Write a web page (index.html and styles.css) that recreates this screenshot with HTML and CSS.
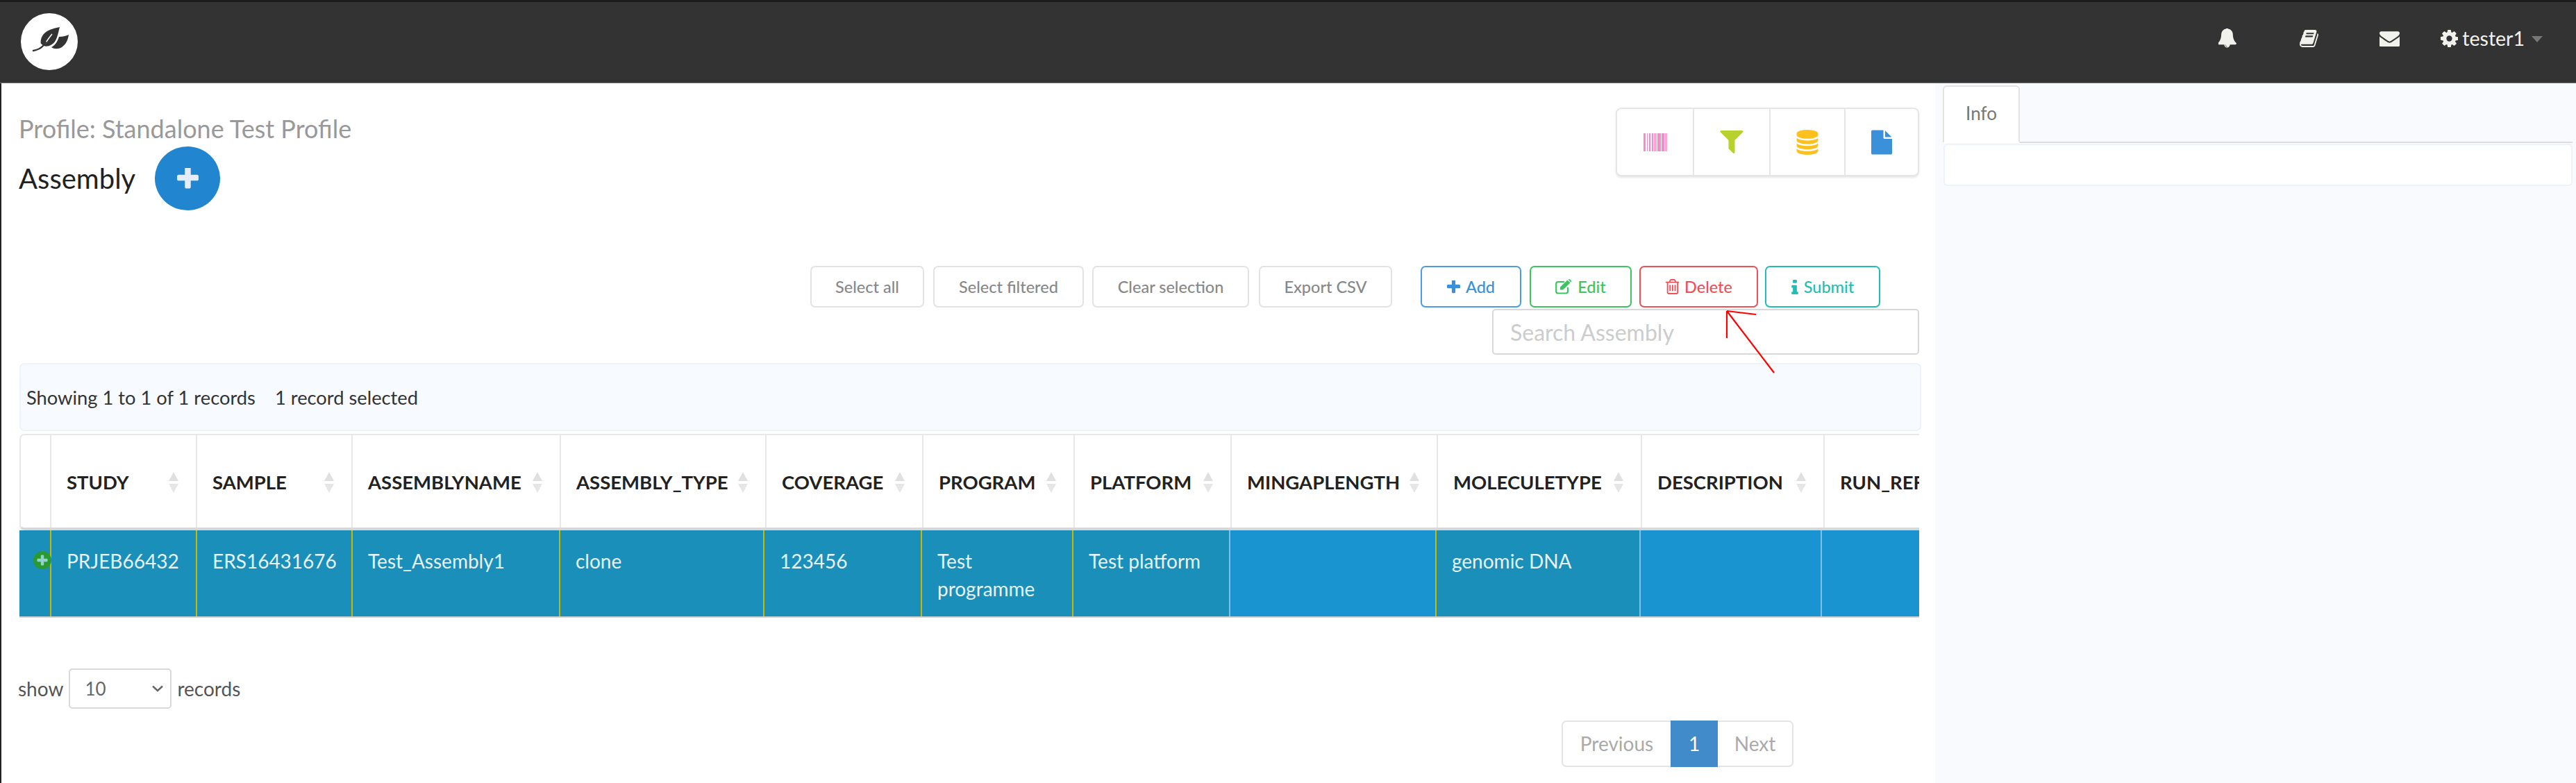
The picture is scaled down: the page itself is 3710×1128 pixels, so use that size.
FILE: index.html
```html
<!DOCTYPE html>
<html lang="en">
<head>
<title>Assembly</title>
<meta charset="utf-8">
<meta name="viewport" content="width=device-width, initial-scale=1">
<link rel="stylesheet" href="styles.css">
</head>
<body>

<!-- Top bar -->
<div class="navbar">
  <div class="logo">
    <svg viewBox="0 0 82 82" width="82" height="82">
      <path fill="#333" d="M44 49 C50 46 53 40 55 34 C60 34 65 33 69 31 C68 38 65 45 59 49 C54 52 48 52 44 49 Z"/>
      <path fill="#333" d="M56 20 C47 22 38 24 33 30 C29 35 28 40 29 44 L33 47 C39 49 45 46 49 41 C53 35 54 27 56 20 Z"/>
      <path fill="none" stroke="#fff" stroke-width="1.6" d="M35 44 C38 39 41 35 45 30"/>
      <path fill="none" stroke="#333" stroke-width="2.4" stroke-linecap="round" d="M18 54 C23 53 27 52 31 48 C33 46 35 44 36 42"/>
    </svg>
  </div>
  <div class="nav-right">
    <svg class="nav-icon bell" viewBox="128 128 1600 1664"><path d="M912 1696q0-16-16-16-59 0-101.5-42.5t-42.5-101.5q0-16-16-16t-16 16q0 73 51.5 124.5t124.5 51.5q16 0 16-16zm816-288q0 52-38 90t-90 38h-448q0 106-75 181t-181 75-181-75-75-181h-448q-52 0-90-38t-38-90q50-42 91-88t85-119.5 74.5-158.5 50-206 19.5-260q0-152 117-282.5t307-158.5q-8-19-8-39 0-40 28-68t68-28 68 28 28 68q0 20-8 39 190 28 307 158.5t117 282.5q0 139 19.5 260t50 206 74.5 158.5 85 119.5 91 88z"/></svg>
    <svg class="nav-icon book" viewBox="64 128 1664 1536"><path d="M1703 478q40 57 18 129l-275 906q-19 64-76.5 107.5t-122.5 43.5h-923q-77 0-148.5-53.5t-99.5-131.5q-24-67-2-127 0-4 3-27t4-37q1-8-3-21.5t-3-19.5q2-11 8-21t16.5-23.5 16.5-23.5q23-38 45-91.5t30-91.5q3-10 .5-30t-.5-28q3-11 17-28t17-23q21-36 42-92t25-90q1-9-2.5-32t.5-28q4-13 22-30.5t22-22.5q19-26 42.5-84.5t27.5-96.5q1-8-3-25.5t-2-26.5q2-8 9-18t18-23 17-21q8-12 16.5-30.5t15-35 16-36 19.5-32 26.5-23.5 36-11.5 47.5 5.5l-1 3q38-9 51-9h761q74 0 114 56t18 130l-274 906q-36 119-71.5 153.5t-128.5 34.5h-869q-27 0-38 15-11 16-1 43 24 70 144 70h923q29 0 56-15.5t35-41.5l300-987q7-22 5-57 38 15 59 43zm-1064 2q-4 13 2 22.5t20 9.5h608q13 0 25.5-9.5t16.5-22.5l21-64q4-13-2-22.5t-20-9.5h-608q-13 0-25.5 9.5t-16.5 22.5zm-83 256q-4 13 2 22.5t20 9.5h608q13 0 25.5-9.5t16.5-22.5l21-64q4-13-2-22.5t-20-9.5h-608q-13 0-25.5 9.5t-16.5 22.5z"/></svg>
    <svg class="nav-icon mail" viewBox="0 256 1792 1280"><path d="M1792 710v794q0 66-47 113t-113 47h-1472q-66 0-113-47t-47-113v-794q44 49 101 87 362 246 497 345 57 42 92.5 65.5t94.5 48 110 24.5h2q51 0 110-24.5t94.5-48 92.5-65.5q170-123 498-345 57-39 100-87zm0-294q0 79-49 151t-122 123q-376 261-468 325-10 7-42.5 30.5t-54 38-52 32.5-57.5 27-50 9h-2q-23 0-50-9t-57.5-27-52-32.5-54-38-42.5-30.5q-91-64-262-182.5t-205-142.5q-62-42-117-115.5t-55-136.5q0-78 41.5-130t118.5-52h1472q65 0 112.5 47t47.5 113z"/></svg>
    <svg class="nav-icon gear" viewBox="128 128 1536 1536"><path d="M1152 896q0-106-75-181t-181-75-181 75-75 181 75 181 181 75 181-75 75-181zm512-109v222q0 12-8 23t-20 13l-185 28q-19 54-39 91 35 50 107 138 10 12 10 25t-9 23q-27 37-99 108t-94 71q-12 0-26-9l-138-108q-44 23-91 38-16 136-29 186-7 28-36 28h-222q-14 0-24.5-8.5t-11.5-21.5l-28-184q-49-16-90-37l-141 107q-10 9-25 9-14 0-25-11-126-114-165-168-7-10-7-23 0-12 8-23 15-21 51-66.5t54-70.5q-27-50-41-99l-183-27q-13-2-21-12.5t-8-23.5v-222q0-12 8-23t19-13l186-28q14-46 39-92-40-57-107-138-10-12-10-24 0-10 9-23 26-36 98.5-107.5t94.5-71.5q13 0 26 10l138 107q44-23 91-38 16-136 29-186 7-28 36-28h222q14 0 24.5 8.5t11.5 21.5l28 184q49 16 90 37l142-107q9-9 24-9 13 0 25 10 129 119 165 170 7 8 7 22 0 12-8 23-15 21-51 66.5t-54 70.5q26 50 41 98l183 28q13 2 21 12.5t8 23.5z"/></svg>
    <span class="user">tester1</span>
    <span class="caret"></span>
  </div>
</div>

<div class="content">

  <!-- Main column -->
  <div class="main">
    <div class="page_head">
      <div class="titles">
        <p class="profile_name">Profile: Standalone Test Profile</p>
        <div class="component">
          <h2>Assembly</h2>
          <span class="add_circle">
            <svg viewBox="192 192 1408 1408" width="31" height="31"><path fill="#e3eefa" d="M1600 736v192q0 40-28 68t-68 28h-416v416q0 40-28 68t-68 28h-192q-40 0-68-28t-28-68v-416h-416q-40 0-68-28t-28-68v-192q0-40 28-68t68-28h416v-416q0-40 28-68t68-28h192q40 0 68 28t28 68v416h416q40 0 68 28t28 68z"/></svg>
          </span>
        </div>
      </div>
      <div class="tool_panel">
        <div class="tool tool1">
          <svg viewBox="0 0 34 26" width="34" height="26" fill="#f48cc9">
            <rect x="0" width="3" height="26"/><rect x="5" width="1" height="26"/><rect x="8" width="2" height="26"/><rect x="12" width="2" height="26"/><rect x="15" width="4" height="26" fill="#f5a8d6"/><rect x="20" width="5" height="26"/><rect x="26" width="4" height="26"/><rect x="31" width="3" height="26" fill="#f5a8d6"/>
          </svg>
        </div>
        <div class="tool tool2">
          <svg viewBox="128 256 1536 1408" width="36" height="35"><path fill="#b9d12c" d="M1595 295q17 41-14 70l-493 493v742q0 42-39 59-13 5-25 5-27 0-45-19l-256-256q-19-19-19-45v-486l-493-493q-31-29-14-70 17-39 59-39h1280q42 0 59 39z"/></svg>
        </div>
        <div class="tool tool3">
          <svg viewBox="128 0 1536 1792" width="32" height="36"><path fill="#fdc01f" d="M896 768q237 0 443-43t325-127v170q0 69-103 128t-280 93.5-385 34.5-385-34.5-280-93.5-103-128v-170q119 84 325 127t443 43zm0 768q237 0 443-43t325-127v170q0 69-103 128t-280 93.5-385 34.5-385-34.5-280-93.5-103-128v-170q119 84 325 127t443 43zm0-384q237 0 443-43t325-127v170q0 69-103 128t-280 93.5-385 34.5-385-34.5-280-93.5-103-128v-170q119 84 325 127t443 43zm0-1152q208 0 385 34.5t280 93.5 103 128v128q0 69-103 128t-280 93.5-385 34.5-385-34.5-280-93.5-103-128v-128q0-69 103-128t280-93.5 385-34.5z"/></svg>
        </div>
        <div class="tool tool4">
          <svg viewBox="128 0 1536 1792" width="30" height="36"><path fill="#3a90d9" d="M1152 512v-472q22 14 36 28l408 408q14 14 28 36h-472zm-128 32q0 40 28 68t68 28h544v1056q0 40-28 68t-68 28h-1344q-40 0-68-28t-28-68v-1600q0-40 28-68t68-28h800v544z"/></svg>
        </div>
      </div>
    </div>

    <div class="toolbar">
      <button class="btn plain b_all">Select all</button>
      <button class="btn plain b_filtered">Select filtered</button>
      <button class="btn plain b_clear">Clear selection</button>
      <button class="btn plain b_export">Export CSV</button>
      <button class="btn b_add">
        <svg viewBox="192 192 1408 1408" width="19" height="19"><path fill="currentColor" d="M1600 736v192q0 40-28 68t-68 28h-416v416q0 40-28 68t-68 28h-192q-40 0-68-28t-28-68v-416h-416q-40 0-68-28t-28-68v-192q0-40 28-68t68-28h416v-416q0-40 28-68t68-28h192q40 0 68 28t28 68v416h416q40 0 68 28t28 68z"/></svg>
        Add
      </button>
      <button class="btn b_edit">
        <svg viewBox="0 0 24 22" width="24" height="22">
          <path fill="none" stroke="currentColor" stroke-width="2.2" d="M18 12 V18 Q18 20.5 15 20.5 H4 Q1.2 20.5 1.2 18 V7 Q1.2 4 4 4 H13"/>
          <path fill="currentColor" d="M7 15.5 V11.5 L17.5 1.5 L21.5 5.5 L11 15.5 Z M18.5 0.5 Q20 -0.5 21.5 0.8 L22.5 1.8 Q23.7 3.2 22.5 4.5 Z"/>
        </svg>
        Edit
      </button>
      <button class="btn b_delete">
        <svg viewBox="128 128 1408 1536" width="20" height="22"><path fill="currentColor" d="M704 736v576q0 14-9 23t-23 9h-64q-14 0-23-9t-9-23v-576q0-14 9-23t23-9h64q14 0 23 9t9 23zm256 0v576q0 14-9 23t-23 9h-64q-14 0-23-9t-9-23v-576q0-14 9-23t23-9h64q14 0 23 9t9 23zm256 0v576q0 14-9 23t-23 9h-64q-14 0-23-9t-9-23v-576q0-14 9-23t23-9h64q14 0 23 9t9 23zm128 724v-948h-896v948q0 22 7 40.5t14.5 27 10.5 8.5h832q3 0 10.5-8.5t14.5-27 7-40.5zm-672-1076h448l-48-117q-7-9-17-11h-317q-10 2-17 11zm928 32v64q0 14-9 23t-23 9h-96v948q0 83-47 143.5t-113 60.5h-832q-66 0-113-58.5t-47-141.5v-952h-96q-14 0-23-9t-9-23v-64q0-14 9-23t23-9h309l70-167q15-37 54-63t79-26h320q40 0 79 26t54 63l70 167h309q14 0 23 9t9 23z"/></svg>
        Delete
      </button>
      <button class="btn b_submit">
        <svg viewBox="576 128 640 1408" width="10" height="21"><path fill="currentColor" d="M1216 1344v128q0 26-19 45t-45 19h-512q-26 0-45-19t-19-45v-128q0-26 19-45t45-19h64v-384h-64q-26 0-45-19t-19-45v-128q0-26 19-45t45-19h384q26 0 45 19t19 45v576h64q26 0 45 19t19 45zm-128-1152v192q0 26-19 45t-45 19h-256q-26 0-45-19t-19-45v-192q0-26 19-45t45-19h256q26 0 45 19t19 45z"/></svg>
        Submit
      </button>
    </div>

    <div class="search_row">
      <input class="search" type="text" placeholder="Search Assembly">
    </div>

    <div class="info_bar">
      <span>Showing 1 to 1 of 1 records</span>
      <span>1 record selected</span>
    </div>

    <!-- Table: header and body are separate grids, as their columns differ by a few pixels -->
    <div class="table_wrap">
      <div class="thead">
        <div class="th"></div>
        <div class="th">STUDY<span class="sort"></span></div>
        <div class="th">SAMPLE<span class="sort"></span></div>
        <div class="th">ASSEMBLYNAME<span class="sort"></span></div>
        <div class="th">ASSEMBLY_TYPE<span class="sort"></span></div>
        <div class="th">COVERAGE<span class="sort"></span></div>
        <div class="th">PROGRAM<span class="sort"></span></div>
        <div class="th">PLATFORM<span class="sort"></span></div>
        <div class="th">MINGAPLENGTH<span class="sort"></span></div>
        <div class="th">MOLECULETYPE<span class="sort"></span></div>
        <div class="th">DESCRIPTION<span class="sort"></span></div>
        <div class="th">RUN_REF</div>
      </div>
      <div class="tbody">
        <div class="td sel first">
          <svg class="expand" viewBox="128 128 1536 1536" width="26" height="26"><circle cx="896" cy="896" r="500" fill="#8fd3cb"/><path fill="#2a9a30" d="M1344 960v-128q0-26-19-45t-45-19h-256v-256q0-26-19-45t-45-19h-128q-26 0-45 19t-19 45v256h-256q-26 0-45 19t-19 45v128q0 26 19 45t45 19h256v256q0 26 19 45t45 19h128q26 0 45-19t19-45v-256h256q26 0 45-19t19-45zm320-64q0 209-103 385.5t-279.5 279.5-385.5 103-385.5-103-279.5-279.5-103-385.5 103-385.5 279.5-279.5 385.5-103 385.5 103 279.5 279.5 103 385.5z"/></svg>
        </div>
        <div class="td sel">PRJEB66432</div>
        <div class="td sel">ERS16431676</div>
        <div class="td sel">Test_Assembly1</div>
        <div class="td sel">clone</div>
        <div class="td sel">123456</div>
        <div class="td sel">Test programme</div>
        <div class="td sel">Test platform</div>
        <div class="td"></div>
        <div class="td sel">genomic DNA</div>
        <div class="td"></div>
        <div class="td"></div>
      </div>
    </div>

    <div class="table_foot">
      <span>show</span>
      <div class="length_box">
        <span>10</span>
        <svg viewBox="0 0 16 10" width="16" height="10"><path fill="none" stroke="#666" stroke-width="2.4" d="M1 1.5 L8 8 L15 1.5"/></svg>
      </div>
      <span>records</span>
    </div>

    <div class="pager_row">
      <div class="pager">
        <a class="page_prev">Previous</a>
        <a class="page_on">1</a>
        <a class="page_next">Next</a>
      </div>
    </div>

    <!-- hand drawn arrow pointing at Delete -->
    <svg class="arrow" viewBox="0 0 90 110" width="90" height="110">
      <path fill="none" stroke="#f00" stroke-width="2.2" d="M7 10 L75 99"/>
      <path fill="none" stroke="#f00" stroke-width="2.2" d="M7 10 L49 15"/>
      <path fill="none" stroke="#f00" stroke-width="2.2" d="M7 10 L7 49"/>
    </svg>
  </div>

  <!-- Side column -->
  <div class="side">
    <div class="tabs">
      <div class="tab">Info</div>
    </div>
    <div class="tab_box"></div>
  </div>
</div>

</body>
</html>
```

FILE: styles.css
```css
* {
  box-sizing: border-box;
}

html, body {
  margin: 0;
  height: 100%;
}

body {
  font-family: Lato, "Liberation Sans", sans-serif;
  color: #333;
  background: #fff;
  overflow: hidden;
}

/* Top bar */
.navbar {
  display: flex;
  align-items: center;
  height: 120px;
  padding-left: 30px;
  background: #333;
  border-top: 3px solid #1c1c1c;
  border-bottom: 1px solid #777;
}

.logo {
  width: 82px;
  height: 82px;
  margin-top: -3px;
  border-radius: 50%;
  background: #fff;
}

.nav-right {
  display: flex;
  align-items: center;
  margin-left: auto;
  margin-top: -12px;
  padding-right: 48px;
  color: #f2f2ec;
}

.nav-icon {
  fill: #f2f2ec;
}

.bell {
  width: 26px;
  height: 28px;
}

.book {
  width: 27px;
  height: 25px;
  margin-left: 91px;
}

.mail {
  width: 29px;
  height: 23px;
  margin-left: 88px;
}

.gear {
  width: 25px;
  height: 25px;
  margin-left: 59px;
  margin-right: 6px;
}

.user {
  font-size: 28.5px;
  line-height: 30px;
}

.caret {
  margin-left: 10px;
  margin-top: 2px;
  border-left: 8px solid transparent;
  border-right: 8px solid transparent;
  border-top: 9px solid #777;
}

/* Two columns below the bar */
.content {
  display: flex;
  height: 1008px;
}

.main {
  position: relative;
  width: 2787px;
  padding: 0 23px 0 26px;
  border-left: 2px solid #222;
  background: #fff;
}

.side {
  flex: 1;
  padding: 3px 5px 0 11px;
  background: #f9fafe;
}

/* Title and the four tool buttons */
.page_head {
  display: flex;
  justify-content: space-between;
  height: 263px;
}

.titles {
  margin-left: -1px;
}

.profile_name {
  margin: 45px 0 0;
  font-size: 36px;
  line-height: 40px;
  color: #999;
}

.component {
  display: flex;
  align-items: center;
  margin-top: 6px;
}

.component h2 {
  margin: 0;
  font-size: 40px;
  font-weight: 400;
  line-height: 46px;
  color: #222;
}

.add_circle {
  display: flex;
  align-items: center;
  justify-content: center;
  width: 94px;
  height: 92px;
  margin-left: 28px;
  border-radius: 50%;
  background: #2185d0;
}

.tool_panel {
  display: flex;
  height: 99px;
  margin-top: 35px;
  background: #fff;
  border: 2px solid #e6e6e6;
  border-radius: 8px;
  box-shadow: 0 2px 3px rgba(0, 0, 0, 0.1);
}

.tool {
  display: flex;
  align-items: center;
  justify-content: center;
  border-left: 2px solid #e6e6e6;
}

.tool1 {
  width: 109px;
  border-left: 0;
}

.tool2 {
  width: 110px;
}

.tool3 {
  width: 108px;
}

.tool4 {
  width: 106px;
}

/* Action buttons */
.toolbar {
  display: flex;
  justify-content: flex-end;
  padding-right: 56px;
}

.btn {
  display: flex;
  align-items: center;
  justify-content: center;
  gap: 8px;
  height: 60px;
  padding: 0;
  font-family: Lato, sans-serif;
  font-size: 23.5px;
  font-weight: 500;
  background: #fff;
  border: 2px solid #ccc;
  border-radius: 7px;
}

.plain {
  color: #888;
  border-color: #e3e3e3;
}

.b_all {
  width: 164px;
}

.b_filtered {
  width: 217px;
  margin-left: 13px;
}

.b_clear {
  width: 226px;
  margin-left: 12px;
}

.b_export {
  width: 192px;
  margin-left: 14px;
}

.b_add {
  width: 145px;
  margin-left: 41px;
  color: #3a8fd8;
  border-color: #4b9ce0;
}

.b_edit {
  width: 147px;
  margin-left: 12px;
  color: #3cc560;
  border-color: #3cc560;
}

.b_delete {
  width: 171px;
  margin-left: 11px;
  color: #ee5058;
  border-color: #ee5058;
}

.b_submit {
  width: 166px;
  margin-left: 10px;
  color: #22bdb5;
  border-color: #22bdb5;
}

.search_row {
  display: flex;
  justify-content: flex-end;
  margin-top: 2px;
}

.search {
  width: 615px;
  height: 66px;
  padding: 0 24px;
  font-family: Lato, sans-serif;
  font-size: 32px;
  background: #fff;
  border: 2px solid #d8d8d8;
  border-radius: 5px;
}

.search::placeholder {
  color: #ccc;
}

.info_bar {
  display: flex;
  align-items: center;
  gap: 28px;
  height: 98px;
  margin-top: 12px;
  margin-right: -3px;
  padding: 0 8px;
  font-size: 27.3px;
  background: #f7faff;
  border: 2px solid #edf3fc;
  border-radius: 7px;
}

/* Table */
.table_wrap {
  margin-top: 4px;
  overflow: hidden;
}

.thead, .tbody {
  display: grid;
}

.thead {
  grid-template-columns: 42px 210px 224px 300px 296px 226px 218px 226px 297px 294px 263px 138px;
  height: 139px;
  border: 2px solid #e8e8e8;
  border-right: 0;
  border-bottom: 4px solid #d8d8d8;
  border-radius: 7px 0 0 7px;
}

.th {
  display: flex;
  align-items: flex-start;
  padding: 52px 0 0 22px;
  font-size: 27.5px;
  font-weight: 700;
  line-height: 32px;
  color: #222;
  border-left: 2px solid #e8e8e8;
  white-space: nowrap;
  overflow: hidden;
}

.th:first-child {
  border-left: 0;
}

/* Up and down triangles at the end of a heading */
.sort {
  position: relative;
  flex: none;
  width: 14px;
  height: 30px;
  margin-left: auto;
  margin-right: 25px;
  margin-top: 1px;
}

.sort::before, .sort::after {
  content: "";
  position: absolute;
  left: 0;
  border-left: 7px solid transparent;
  border-right: 7px solid transparent;
}

.sort::before {
  top: 0;
  border-bottom: 13px solid #e0e0e0;
}

.sort::after {
  bottom: 0;
  border-top: 13px solid #e6e6e6;
}

.tbody {
  grid-template-columns: 44px 210px 224px 299px 294px 227px 218px 226px 297px 294px 261px 142px;
  height: 126px;
  border-bottom: 2px solid #d4d4d4;
}

.td {
  padding: 24px 22px 0 22px;
  font-size: 28px;
  line-height: 40px;
  color: #e6f4f9;
  background: #1a93d1;
  border-left: 2px solid #7fc0e8;
}

.td.sel {
  background: #1a8fb9;
  border-left-color: #c8b800;
}

.td.first {
  position: relative;
  padding: 0;
  border-left: 0;
}

.expand {
  position: absolute;
  top: 30px;
  left: 20px;
}

/* Below the table */
.table_foot {
  display: flex;
  align-items: center;
  gap: 8px;
  margin-top: 73px;
  margin-left: -2px;
  font-size: 28px;
  color: #555;
}

.length_box {
  display: flex;
  align-items: center;
  justify-content: space-between;
  width: 148px;
  height: 58px;
  padding: 0 10px 0 21px;
  font-size: 26px;
  color: #666;
  border: 2px solid #d8d8d8;
  border-radius: 5px;
}

.pager_row {
  display: flex;
  justify-content: flex-end;
  margin-top: 17px;
  padding-right: 181px;
}

.pager {
  display: flex;
  height: 67px;
  font-size: 28px;
  line-height: 63px;
  color: #aaa;
  border: 2px solid #e4e4e4;
  border-radius: 7px;
}

.page_prev {
  width: 155px;
  text-align: center;
}

.page_on {
  width: 68px;
  height: 67px;
  margin-top: -2px;
  line-height: 67px;
  text-align: center;
  color: #fff;
  background: #428bca;
}

.page_next {
  width: 107px;
  text-align: center;
}

/* Arrow sits over the search box and the info bar */
.arrow {
  position: absolute;
  top: 318px;
  left: 2478px;
}

/* Side tabs */
.tabs {
  display: flex;
  height: 83px;
  border-bottom: 2px solid #ddd;
}

.tab {
  width: 111px;
  height: 83px;
  padding-top: 22px;
  font-size: 26px;
  text-align: center;
  color: #777;
  background: #fff;
  border: 2px solid #e2e2e2;
  border-bottom-color: #fff;
  border-radius: 6px 6px 0 0;
}

.tab_box {
  height: 61px;
  margin: 1px 0 0 1px;
  background: #fff;
  border: 2px solid #eef2fb;
  border-radius: 5px;
}
```
